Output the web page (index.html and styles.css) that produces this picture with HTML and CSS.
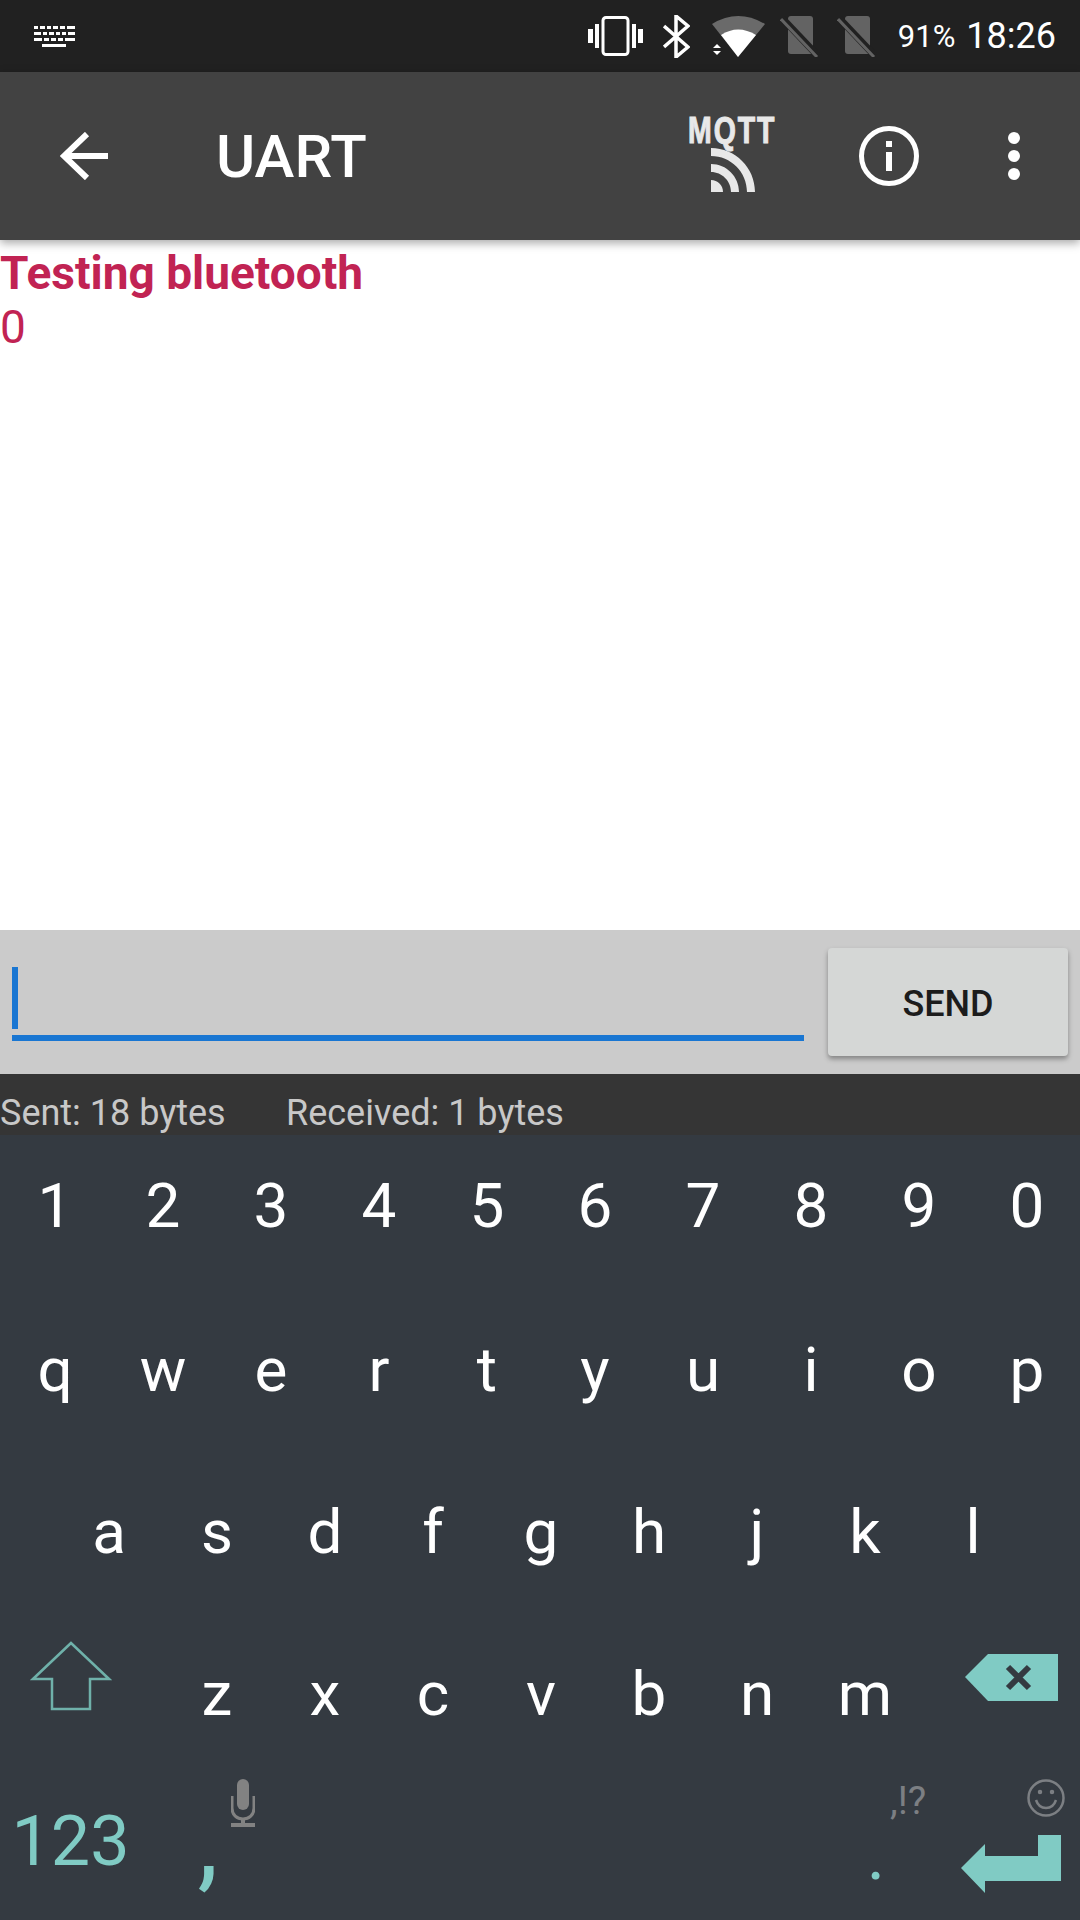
FILE: index.html
```html
<!DOCTYPE html>
<html lang="en">
<head>
  <meta charset="UTF-8">
  <meta name="viewport" content="width=device-width, initial-scale=1.0">
  <title>UART</title>
  <link rel="stylesheet" href="styles.css">
</head>
<body>
  <div class="statusbar">
    <svg class="kb-icon" width="41" height="21" viewBox="0 0 41 21" fill="#fff">
      <path d="M0 0h4v3H0zM6 0h5v3H6zM13 0h4v3h-4zM19 0h5v3h-5zM26 0h5v3h-5zM33 0h8v3h-8z"/>
      <path d="M0 6h7v3H0zM9 6h4v3H9zM15 6h5v3h-5zM22 6h4v3h-4zM28 6h4v3h-4zM34 6h7v3h-7z"/>
      <path d="M0 12h8v3H0zM10 12h5v3h-5zM17 12h5v3h-5zM24 12h5v3h-5zM31 12h10v3H31z"/>
      <path d="M8 18h24v3H8z"/>
    </svg>
    <div class="status-right">
      <svg class="st-vibrate" width="55" height="40" viewBox="0 0 55 40" fill="none" stroke="#fff">
        <rect x="15" y="1.5" width="25" height="37" rx="3" stroke-width="3"/>
        <path d="M9 8v24M46 8v24" stroke-width="4"/>
        <path d="M2.500 13v14M52.500 13v14" stroke-width="5"/>
      </svg>
      <svg class="st-bt" width="27" height="43" viewBox="0 0 27 43" fill="none" stroke="#fff" stroke-width="3.500">
        <path d="M1 11l24 21-12 10V1l12 10L1 32"/>
      </svg>
      <svg class="st-wifi" width="53" height="41" viewBox="0 0 53 41">
        <path d="M0 8Q26-8 53 8L26 41z" fill="#6a6a6a"/>
        <path d="M9 19Q26 8 44 19L26 41z" fill="#fff"/>
        <path d="M1 32l4-4 4 4zM1 35h8l-4 4z" fill="#fff"/>
      </svg>
      <svg class="st-sim st-sim-first" width="40" height="41" viewBox="0 0 40 41">
        <path d="M8 3q0-3 3-3h19q3 0 3 3v33q0 2-3 2H11q-3 0-3-3z" fill="#636363"/>
        <path d="M2 2l36 38" stroke="#212121" stroke-width="7"/>
        <path d="M1 3l36 38" stroke="#636363" stroke-width="3"/>
      </svg>
      <svg class="st-sim" width="40" height="41" viewBox="0 0 40 41">
        <path d="M8 3q0-3 3-3h19q3 0 3 3v33q0 2-3 2H11q-3 0-3-3z" fill="#636363"/>
        <path d="M2 2l36 38" stroke="#212121" stroke-width="7"/>
        <path d="M1 3l36 38" stroke="#636363" stroke-width="3"/>
      </svg>
      <span class="st-batt">91%</span>
      <span class="st-time">18:26</span>
    </div>
  </div>

  <div class="toolbar">
    <svg class="back" width="48" height="48" viewBox="0 0 48 48" fill="none" stroke="#fff" stroke-width="6">
      <path d="M48 24H4M27 2L4 24l23 22"/>
    </svg>
    <span class="title">UART</span>
    <div class="mqtt">
      <div class="mqtt-label">MQTT</div>
      <svg class="mqtt-feed" width="44" height="44" viewBox="0 0 44 44" fill="#e8e8e8">
        <path d="M0 0c24.300 0 44 19.700 44 44h-8C36 24.100 19.900 8 0 8z"/>
        <path d="M0 16c15.500 0 28 12.500 28 28h-8c0-11-9-20-20-20z"/>
        <path d="M0 32c6.600 0 12 5.400 12 12H0z"/>
      </svg>
    </div>
    <svg class="info" width="60" height="60" viewBox="0 0 60 60" fill="none" stroke="#fff">
      <circle cx="30" cy="30" r="27.500" stroke-width="5"/>
      <path d="M30 15v6M30 26v19" stroke-width="6"/>
    </svg>
    <div class="overflow"><i></i><i></i><i></i></div>
  </div>

  <div class="terminal">
    <div class="term-bold">Testing bluetooth</div>
    <div class="term-line">0</div>
  </div>

  <div class="sendbar">
    <div class="field"><div class="cursor"></div></div>
    <div class="send">SEND</div>
  </div>

  <div class="counters">
    <span class="sent">Sent: 18 bytes</span>
    <span>Received: 1 bytes</span>
  </div>

  <div class="keyboard">
    <div class="row row-digits">
      <div class="key">1</div><div class="key">2</div><div class="key">3</div><div class="key">4</div><div class="key">5</div>
      <div class="key">6</div><div class="key">7</div><div class="key">8</div><div class="key">9</div><div class="key">0</div>
    </div>
    <div class="row row-q">
      <div class="key">q</div><div class="key">w</div><div class="key">e</div><div class="key">r</div><div class="key">t</div>
      <div class="key">y</div><div class="key">u</div><div class="key">i</div><div class="key">o</div><div class="key">p</div>
    </div>
    <div class="row row-a">
      <div class="key">a</div><div class="key">s</div><div class="key">d</div><div class="key">f</div><div class="key">g</div>
      <div class="key">h</div><div class="key">j</div><div class="key">k</div><div class="key">l</div>
    </div>
    <div class="row">
      <div class="key key-shift">
        <svg width="82" height="70" viewBox="0 0 82 70" fill="none" stroke="#6fb1aa" stroke-width="2.500">
          <path d="M41 2L3 38h19v30h38V38h19z"/>
        </svg>
      </div>
      <div class="key">z</div><div class="key">x</div><div class="key">c</div><div class="key">v</div>
      <div class="key">b</div><div class="key">n</div><div class="key">m</div>
      <div class="key key-del">
        <svg width="93" height="47" viewBox="0 0 93 47">
          <path d="M23 0h70v47H23L0 23z" fill="#80cbc4"/>
          <path d="M43 13l21 21M64 13L43 34" stroke="#343a41" stroke-width="6" fill="none"/>
        </svg>
      </div>
    </div>
    <div class="row row-bottom">
      <div class="key key-num">123</div>
      <div class="key key-comma">,
        <svg class="hint-mic" width="24" height="48" viewBox="0 0 24 48" fill="#828282">
          <rect x="6" y="0" width="12" height="31" rx="6"/>
          <path d="M1 17v12c0 7 5 11 11 11s11-4 11-11V17" fill="none" stroke="#828282" stroke-width="3"/>
          <path d="M10 39h4v6h-4zM0 44h24v4H0z"/>
        </svg>
      </div>
      <div class="key key-space"></div>
      <div class="key key-period">.
        <span class="hint-punct">,!?</span>
      </div>
      <div class="key key-enter">
        <svg class="hint-smile" width="38" height="38" viewBox="0 0 38 38" fill="none" stroke="#7c7f83" stroke-width="2.500">
          <circle cx="19" cy="19" r="17.500"/>
          <path d="M9 21c2 6 6 8 10 8s8-2 10-8"/>
          <circle cx="13" cy="13" r="1" fill="#7c7f83"/>
          <circle cx="25" cy="13" r="1" fill="#7c7f83"/>
        </svg>
        <svg class="enter-icon" width="100" height="58" viewBox="0 0 100 58" fill="#80cbc4">
          <path d="M77 0h23v46H24v12L0 33 24 9v12h53z"/>
        </svg>
      </div>
    </div>
  </div>
</body>
</html>
```

FILE: styles.css
```css
* {
  box-sizing: border-box;
}
body {
  margin: 0;
  width: 1080px;
  height: 1920px;
  display: flex;
  flex-direction: column;
  overflow: hidden;
  font-family: Roboto, sans-serif;
  background: #fff;
}
svg {
  display: block;
}

.statusbar {
  height: 72px;
  flex: none;
  background: #212121;
  color: #fff;
  display: flex;
  align-items: center;
  justify-content: space-between;
  padding: 0 24px 0 34px;
}
.status-right {
  display: flex;
  align-items: center;
}
.st-bt {
  margin-left: 20px;
}
.st-wifi {
  margin-left: 22px;
}
.st-sim {
  margin-left: 17px;
}
.st-sim-first {
  margin-left: 15px;
}
.st-batt {
  margin-left: 21px;
  font-size: 31px;
}
.st-time {
  margin-left: 11px;
  font-size: 36px;
}

.toolbar {
  height: 168px;
  flex: none;
  background: #424242;
  color: #fff;
  display: flex;
  align-items: center;
  position: relative;
  box-shadow: 0 3px 9px rgba(0, 0, 0, 0.35);
}
.back {
  margin-left: 60px;
}
.title {
  margin-left: 108px;
  font-size: 60px;
  font-weight: 500;
}
.mqtt {
  width: 88px;
  margin-left: auto;
  margin-right: 83px;
  margin-bottom: 3px;
}
.mqtt-label {
  height: 27px;
  font-family: "Liberation Sans", sans-serif;
  font-weight: bold;
  font-size: 37px;
  line-height: 27px;
  letter-spacing: 2.5px;
  color: #e8e8e8;
  -webkit-text-stroke: 1px #e8e8e8;
  white-space: nowrap;
  transform: scaleX(0.77);
  transform-origin: left;
}
.mqtt-feed {
  margin: 4px 0 0 23px;
}
.info {
  margin-right: 89px;
}
.overflow {
  margin-right: 60px;
  display: flex;
  flex-direction: column;
  gap: 6px;
}
.overflow i {
  width: 12px;
  height: 12px;
  border-radius: 50%;
  background: #fff;
}

.terminal {
  flex: 1;
  background: #fff;
  color: #c12353;
  font-size: 46px;
  line-height: 54px;
  padding-top: 6px;
}
.term-bold {
  font-weight: 700;
}

.sendbar {
  height: 144px;
  flex: none;
  background: #cbcbcb;
  display: flex;
  align-items: flex-start;
  padding: 18px 12px 0 12px;
}
.field {
  width: 792px;
  height: 93px;
  border-bottom: 6px solid #1976d2;
  padding-top: 19px;
}
.cursor {
  width: 6px;
  height: 62px;
  background: #1976d2;
}
.send {
  width: 240px;
  height: 108px;
  margin-left: 24px;
  padding-top: 4px;
  background: #d5d7d6;
  border-radius: 4px;
  box-shadow: 0 3px 5px rgba(0, 0, 0, 0.35);
  color: #1c1c1c;
  font-size: 36px;
  font-weight: 500;
  display: flex;
  align-items: center;
  justify-content: center;
}

.counters {
  height: 61px;
  flex: none;
  background: #353535;
  color: #c8c8c8;
  font-size: 36px;
  line-height: 39px;
  padding-top: 20px;
  display: flex;
  overflow: hidden;
}
.sent {
  width: 286px;
}

.keyboard {
  flex: 1;
  background: #343a41;
  color: #fff;
  display: flex;
  flex-direction: column;
  gap: 25px;
  padding-bottom: 25px;
}
.row {
  height: 138px;
  display: flex;
  justify-content: center;
}
.row-digits {
  padding-top: 2px;
}
.row-q {
  padding-top: 4px;
}
.row-a {
  padding-top: 2px;
}
.row-bottom {
  height: 108px;
  justify-content: flex-start;
  color: #80cbc4;
}
.key {
  width: 108px;
  padding-left: 2px;
  font-size: 62px;
  display: flex;
  align-items: center;
  justify-content: center;
  position: relative;
}
.key-shift {
  width: 162px;
  padding: 0 21px 34px 0;
}
.key-del {
  width: 162px;
  padding: 0 0 31px 24px;
}
.key-num {
  width: 141px;
  padding: 0;
  font-size: 70px;
}
.key-comma {
  width: 132px;
  padding: 0 0 0 2px;
  font-size: 106px;
}
.key-space {
  width: 537px;
  padding: 0;
}
.key-period {
  width: 132px;
  padding: 28px 0 0;
  font-size: 70px;
}
.key-enter {
  width: 138px;
  padding: 0;
}
.hint-mic {
  position: absolute;
  left: 90px;
  top: -8px;
}
.hint-punct {
  position: absolute;
  left: 80px;
  top: -9px;
  font-size: 39px;
  color: #7c7f83;
}
.hint-smile {
  position: absolute;
  left: 85px;
  top: -8px;
}
.enter-icon {
  position: absolute;
  left: 19px;
  top: 48px;
}
```
